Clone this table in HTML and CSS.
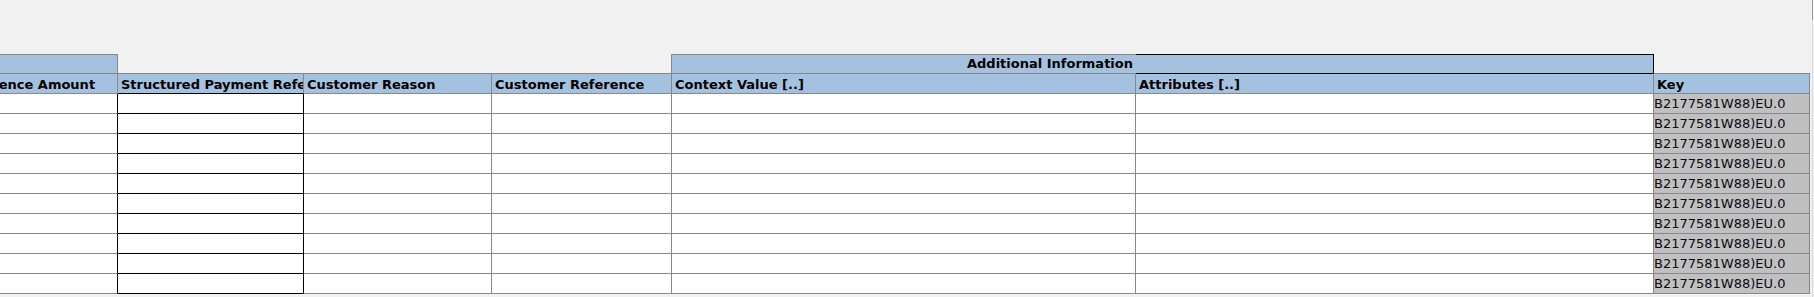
FILE: index.html
```html
<!DOCTYPE html>
<html lang="en">
<head>
<meta charset="utf-8">
<title>Sheet</title>
<link rel="stylesheet" href="styles.css">
</head>
<body>
<div class="window">
  <div class="viewport">
    <div class="toparea"></div>
    <div class="sheet">
      <div class="grp grp-left"></div>
      <div class="grp-gap"></div>
      <div class="grp grp-info"><span>Additional Information</span></div>
      <div class="grp grp-sel"></div>
      <div class="grp-end"></div>

      <div class="hd">Reference Amount</div>
      <div class="hd hd-sel">Structured Payment Reference</div>
      <div class="hd">Customer Reason</div>
      <div class="hd">Customer Reference</div>
      <div class="hd">Context Value [..]</div>
      <div class="hd hd-attr">Attributes [..]</div>
      <div class="hd">Key</div>

      <div class="c c-before"></div><div class="c c-sel"></div><div class="c"></div><div class="c"></div><div class="c"></div><div class="c"></div><div class="c c-key">B2177581W88)EU.0</div>
      <div class="c c-before"></div><div class="c c-sel"></div><div class="c"></div><div class="c"></div><div class="c"></div><div class="c"></div><div class="c c-key">B2177581W88)EU.0</div>
      <div class="c c-before"></div><div class="c c-sel"></div><div class="c"></div><div class="c"></div><div class="c"></div><div class="c"></div><div class="c c-key">B2177581W88)EU.0</div>
      <div class="c c-before"></div><div class="c c-sel"></div><div class="c"></div><div class="c"></div><div class="c"></div><div class="c"></div><div class="c c-key">B2177581W88)EU.0</div>
      <div class="c c-before"></div><div class="c c-sel"></div><div class="c"></div><div class="c"></div><div class="c"></div><div class="c"></div><div class="c c-key">B2177581W88)EU.0</div>
      <div class="c c-before"></div><div class="c c-sel"></div><div class="c"></div><div class="c"></div><div class="c"></div><div class="c"></div><div class="c c-key">B2177581W88)EU.0</div>
      <div class="c c-before"></div><div class="c c-sel"></div><div class="c"></div><div class="c"></div><div class="c"></div><div class="c"></div><div class="c c-key">B2177581W88)EU.0</div>
      <div class="c c-before"></div><div class="c c-sel"></div><div class="c"></div><div class="c"></div><div class="c"></div><div class="c"></div><div class="c c-key">B2177581W88)EU.0</div>
      <div class="c c-before"></div><div class="c c-sel"></div><div class="c"></div><div class="c"></div><div class="c"></div><div class="c"></div><div class="c c-key">B2177581W88)EU.0</div>
      <div class="c c-before"></div><div class="c c-sel"></div><div class="c"></div><div class="c"></div><div class="c"></div><div class="c"></div><div class="c c-key">B2177581W88)EU.0</div>
    </div>
  </div>
  <div class="vscroll">
    <div class="thumb"></div>
    <div class="track"></div>
  </div>
</div>
</body>
</html>
```

FILE: styles.css
```css
html, body {
  margin: 0;
  padding: 0;
  background: #f1f1f1;
  overflow: hidden;
}

body {
  font-family: "DejaVu Sans", Verdana, sans-serif;
  font-size: 13px;
  color: #000;
}

.window {
  display: flex;
  width: 1814px;
  height: 297px;
}

.viewport {
  flex: 1;
  overflow: hidden;
}

.toparea {
  height: 54px;
}

.sheet {
  display: grid;
  grid-template-columns: 162px 186px 188px 180px 464px 518px 156px;
  grid-template-rows: 19px 21px repeat(10, 20px);
  margin-left: -44px;
  width: 1854px;
}

.sheet > div {
  box-sizing: border-box;
  overflow: hidden;
  white-space: nowrap;
  display: flex;
  align-items: flex-end;
  line-height: 15px;
}

/* group header row */
.grp {
  background: #a4c2df;
  font-weight: bold;
  border-top: 1px solid #888;
}

.grp-left {
  border-right: 1px solid #888;
}

.grp-gap {
  grid-column: span 3;
  border-right: 1px solid #888;
}

.grp-info {
  justify-content: flex-end;
  padding-right: 3px;
  padding-bottom: 2px;
}

.grp-sel {
  border-top-color: #000;
  border-right: 1px solid #000;
}

/* column header row */
.hd {
  background: #a4c2df;
  font-weight: bold;
  border-top: 1px solid #888;
  border-right: 1px solid #888;
  border-bottom: 1px solid #888;
  padding-left: 3px;
  padding-bottom: 1px;
}

.hd-sel {
  border-bottom-color: #000;
}

.hd-attr {
  border-top-color: #000;
}

/* data cells */
.c {
  background: #fff;
  border-right: 1px solid #888;
  border-bottom: 1px solid #888;
  padding-bottom: 2px;
}

.c-before {
  border-right-color: #000;
}

.c-sel {
  border-right-color: #000;
  border-bottom-color: #000;
}

.c-key {
  background: #c0c0c0;
  color: #0a0a14;
  padding-left: 0;
}

/* vertical scrollbar sliver */
.vscroll {
  width: 4px;
  display: flex;
  flex-direction: column;
}

.thumb {
  height: 20px;
  margin-left: 2px;
  border-left: 1px solid #9a9a9a;
}

.track {
  flex: 1;
  margin-left: 2px;
  border-left: 1px solid #dadada;
}
```
